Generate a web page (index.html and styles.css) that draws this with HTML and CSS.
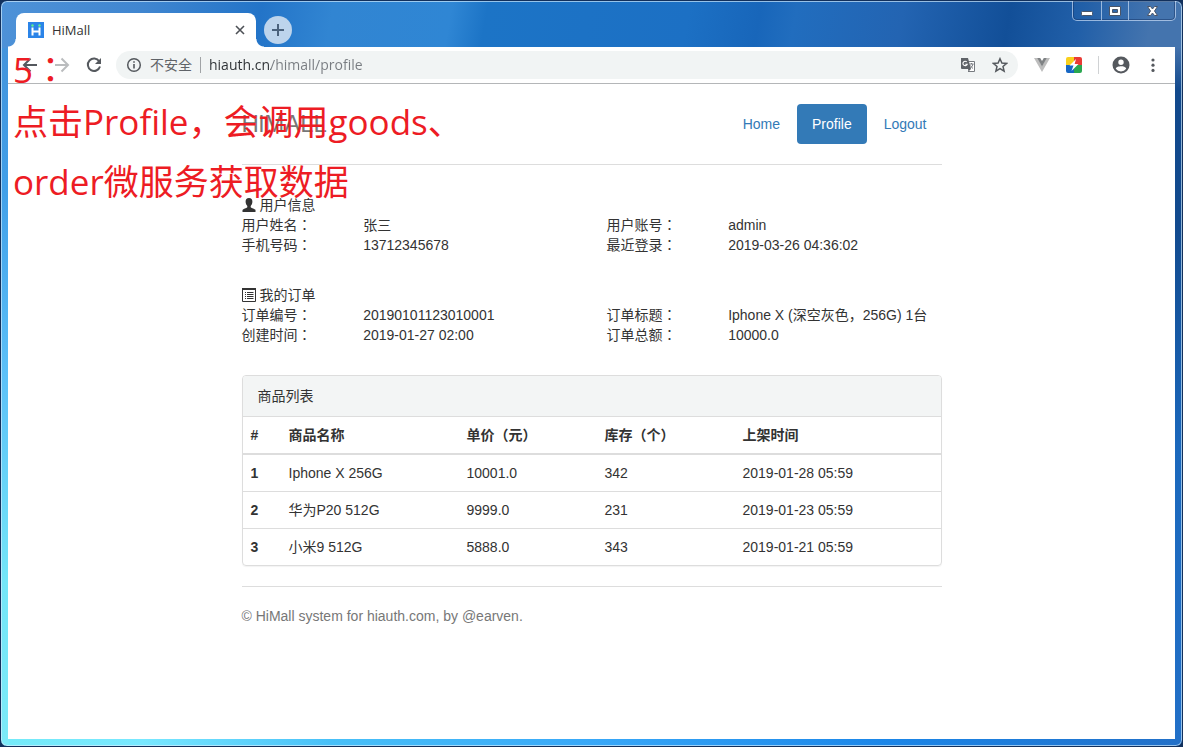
FILE: index.html
```html
<!DOCTYPE html>
<html lang="zh-CN">
<head>
<meta charset="utf-8">
<meta name="viewport" content="width=device-width, initial-scale=1">
<title>HiMall</title>
<link rel="stylesheet" href="styles.css">
</head>
<body>
<div class="window">
  <div class="titlebar">
    <div class="tab">
      <svg class="favicon" width="16" height="16" viewBox="0 0 16 16" aria-hidden="true">
        <rect width="16" height="16" fill="#2b84e8"/>
        <path d="M4.500 5.500V13.500M11.500 5.500V13.500M4.500 9.500H11.500" stroke="#fff" stroke-width="2" fill="none"/>
        <circle cx="4.500" cy="3.500" r="1.200" fill="#5ff08c"/>
        <circle cx="11.500" cy="3.500" r="1.200" fill="#5ff08c"/>
      </svg>
      <span class="tab-title">HiMall</span>
      <button class="tab-close" type="button" aria-label="关闭标签页">
        <svg width="10" height="10" viewBox="0 0 10 10"><path d="M1 1L9 9M9 1L1 9" stroke="#4d5156" stroke-width="1.600"/></svg>
      </button>
      <span class="tab-curve tab-curve-left"></span>
      <span class="tab-curve tab-curve-right"></span>
    </div>
    <button class="new-tab" type="button" aria-label="新标签页">
      <svg width="12" height="12" viewBox="0 0 12 12"><path d="M6 0V12M0 6H12" stroke="#4b627c" stroke-width="2"/></svg>
    </button>
    <div class="window-controls">
      <button class="win-btn" type="button" aria-label="最小化">
        <svg width="28" height="18" viewBox="0 0 28 18"><rect x="8.500" y="9.500" width="11" height="4" rx="1" fill="#fff" stroke="#4a5568"/></svg>
      </button>
      <button class="win-btn" type="button" aria-label="最大化">
        <svg width="26" height="18" viewBox="0 0 26 18"><path fill-rule="evenodd" d="M7.500 4.500H18.500V13.500H7.500ZM10.500 7.500V10.500H15.500V7.500Z" fill="#fff" stroke="#4a5568"/></svg>
      </button>
      <button class="win-btn" type="button" aria-label="关闭">
        <svg width="46" height="18" viewBox="0 0 46 18"><path d="M18.500 4.500H21.500L23.500 7L25.500 4.500H28.500L25.500 9L28.500 13.500H25.500L23.500 11L21.500 13.500H18.500L21.500 9Z" fill="#fff" stroke="#4a5568"/></svg>
      </button>
    </div>
  </div>

  <div class="toolbar">
    <button class="tool" type="button" aria-label="后退">
      <svg width="16" height="16" viewBox="0 0 16 16"><path d="M15 8H2.500M8.500 1.500L2 8L8.500 14.500" fill="none" stroke="#55595e" stroke-width="2"/></svg>
    </button>
    <button class="tool" type="button" aria-label="前进">
      <svg width="16" height="16" viewBox="0 0 16 16"><path d="M1 8H13.500M7.500 1.500L14 8L7.500 14.500" fill="none" stroke="#babcbe" stroke-width="2"/></svg>
    </button>
    <button class="tool" type="button" aria-label="重新加载">
      <svg width="16" height="16" viewBox="0 0 16 16"><path d="M13.200 4.200A6.200 6.200 0 1 0 14 9.500" fill="none" stroke="#55595e" stroke-width="2"/><path d="M15 1V7H9Z" fill="#55595e"/></svg>
    </button>
    <div class="omnibox">
      <svg width="16" height="16" viewBox="0 0 16 16" aria-hidden="true"><circle cx="8" cy="8" r="6.300" fill="none" stroke="#55595e" stroke-width="1.500"/><path d="M8 7V11.500M8 4.200V5.800" stroke="#55595e" stroke-width="1.600"/></svg>
      <label class="security" for="url">不安全</label>
      <input class="url" id="url" type="text" value="hiauth.cn/himall/profile">
      <button class="tool" type="button" aria-label="翻译此页">
        <svg width="16" height="16" viewBox="0 0 16 16"><path d="M5.500 4.500H14.500V14.500H8" fill="#fff" stroke="#777b80"/><path d="M1 1H8L11 12H2Q1 12 1 11Z" fill="#5f6368"/><path d="M6.800 5A2.200 2.200 0 1 0 7.200 7.200H5.300" fill="none" stroke="#fff" stroke-width="1.100"/><path d="M9.500 7H13.500M11.500 6V7M13 7Q12.500 9.500 10.500 11M10.500 8.500Q11.500 10.500 13 11.500" fill="none" stroke="#777b80"/><path d="M8 12H11L8.500 14.500Z" fill="#5f6368"/></svg>
      </button>
      <button class="tool" type="button" aria-label="收藏">
        <svg width="16" height="16" viewBox="0 0 16 16"><path d="M8 1.700L9.900 6L14.600 6.400L11 9.500L12.100 14.100L8 11.600L3.900 14.100L5 9.500L1.400 6.400L6.100 6Z" fill="none" stroke="#55595e" stroke-width="1.500"/></svg>
      </button>
    </div>
    <div class="extensions">
      <button class="tool" type="button" aria-label="Vue.js devtools">
        <svg width="16" height="16" viewBox="0 0 16 16"><path d="M0 1H3.500L8 9L12.500 1H16L8 15Z" fill="#bdbdbd"/><path d="M3.200 1H6.200L8 4L9.800 1H12.800L8 9.500Z" fill="#7f8284"/></svg>
      </button>
      <button class="tool" type="button" aria-label="扩展程序">
        <svg width="16" height="16" viewBox="0 0 16 16"><path d="M0 8V2Q0 0 2 0H8V8Z" fill="#f9d01c"/><path d="M8 0H14Q16 0 16 2V8H8Z" fill="#e93a35"/><path d="M0 8H8V16H2Q0 16 0 14Z" fill="#1767c4"/><path d="M8 8H16V14Q16 16 14 16H8Z" fill="#2aa750"/><path d="M10 2L3.500 8.500H7.500L5.500 14L12.500 7H8.700Z" fill="#fff"/></svg>
      </button>
    </div>
    <div class="account">
      <button class="tool" type="button" aria-label="用户">
        <svg width="18" height="18" viewBox="0 0 18 18"><path fill-rule="evenodd" d="M9 .5A8.500 8.500 0 1 0 9 17.500A8.500 8.500 0 0 0 9 .5ZM9 3.500A2.700 2.700 0 1 1 9 8.900A2.700 2.700 0 1 1 9 3.500ZM3.800 12.800C4 11 7 10.300 9 10.300C11 10.300 14 11 14.200 12.800A6.500 6.500 0 0 1 3.800 12.800Z" fill="#55595e"/></svg>
      </button>
      <button class="tool" type="button" aria-label="菜单">
        <svg width="16" height="16" viewBox="0 0 16 16" fill="#55595e"><circle cx="8" cy="3" r="1.600"/><circle cx="8" cy="8.200" r="1.600"/><circle cx="8" cy="13.400" r="1.600"/></svg>
      </button>
    </div>
  </div>

  <div class="page">
    <div class="container">
      <header class="site-header">
        <h1 class="brand">HiMALL</h1>
        <nav class="nav">
          <a class="nav-link" href="#home">Home</a>
          <a class="nav-link active" href="#profile">Profile</a>
          <a class="nav-link" href="#logout">Logout</a>
        </nav>
      </header>

      <section class="info">
        <h2 class="info-title">
          <svg width="14" height="14" viewBox="0 0 14 14" aria-hidden="true"><path d="M7 0C9.300 0 10.500 1.500 10.400 3.800C10.300 5.600 9.700 7 8.700 7.900V9.200C9.400 10.100 13 10.700 13.500 12V14H.5V12C1 10.700 4.600 10.100 5.300 9.200V7.900C4.300 7 3.700 5.600 3.600 3.800C3.500 1.500 4.700 0 7 0Z" fill="#333"/></svg>
          用户信息
        </h2>
        <dl class="fields">
          <dt>用户姓名<span class="colon" lang="ja">：</span></dt><dd>张三</dd>
          <dt>用户账号<span class="colon" lang="ja">：</span></dt><dd>admin</dd>
          <dt>手机号码<span class="colon" lang="ja">：</span></dt><dd>13712345678</dd>
          <dt>最近登录<span class="colon" lang="ja">：</span></dt><dd>2019-03-26 04:36:02</dd>
        </dl>
      </section>

      <section class="info">
        <h2 class="info-title">
          <svg width="14" height="14" viewBox="0 0 14 14" aria-hidden="true"><path d="M.5 .5H13.500V13.500H.5Z" fill="#fff" stroke="#333"/><path d="M0 1H14" stroke="#333" stroke-width="2"/><path d="M3 4.500H4M3 6.500H4M3 8.500H4M3 10.500H4M5 4.500H11.500M5 6.500H11.500M5 8.500H11.500M5 10.500H11.500" stroke="#333"/></svg>
          我的订单
        </h2>
        <dl class="fields">
          <dt>订单编号<span class="colon" lang="ja">：</span></dt><dd>20190101123010001</dd>
          <dt>订单标题<span class="colon" lang="ja">：</span></dt><dd>Iphone X (深空灰色，256G) 1台</dd>
          <dt>创建时间<span class="colon" lang="ja">：</span></dt><dd>2019-01-27 02:00</dd>
          <dt>订单总额<span class="colon" lang="ja">：</span></dt><dd>10000.0</dd>
        </dl>
      </section>

      <section class="panel">
        <h2 class="panel-heading">商品列表</h2>
        <table class="goods">
          <colgroup><col class="col-index"><col class="col-name"><col class="col-number"><col class="col-number"><col></colgroup>
          <thead>
            <tr><th scope="col">#</th><th scope="col">商品名称</th><th scope="col">单价（元）</th><th scope="col">库存（个）</th><th scope="col">上架时间</th></tr>
          </thead>
          <tbody>
            <tr><th scope="row">1</th><td>Iphone X 256G</td><td>10001.0</td><td>342</td><td>2019-01-28 05:59</td></tr>
            <tr><th scope="row">2</th><td>华为P20 512G</td><td>9999.0</td><td>231</td><td>2019-01-23 05:59</td></tr>
            <tr><th scope="row">3</th><td>小米9 512G</td><td>5888.0</td><td>343</td><td>2019-01-21 05:59</td></tr>
          </tbody>
        </table>
      </section>

      <footer class="site-footer">© HiMall system for hiauth.com, by @earven.</footer>
    </div>
  </div>

  <div class="note">
    <p>5<span class="colon" lang="ja">：</span></p>
    <p>点击Profile，会调用goods、<br>order微服务获取数据</p>
  </div>
</div>
</body>
</html>
```
FILE: styles.css
```css
* {
  box-sizing: border-box;
}

body {
  margin: 0;
  background: #12305c;
  color: #333;
  font: 14px/20px "Liberation Sans", "Noto Sans CJK SC", sans-serif;
}

h1, h2, p, dl, dd {
  margin: 0;
}

button {
  padding: 0;
  border: 0;
  background: none;
  cursor: pointer;
}

svg {
  display: block;
  flex: none;
}

.colon {
  font-family: "Noto Sans CJK JP", sans-serif;
  line-height: 1;
}

.window {
  position: relative;
  display: flex;
  flex-direction: column;
  min-height: 100vh;
  padding: 0 6px 6px;
  border: 1px solid #12305c;
  border-radius: 7px;
  box-shadow: inset 0 0 0 1px rgba(215, 240, 255, 0.65);
  background:
    linear-gradient(100deg, #4e92d8, #4086d0 12%, #2374c8 22%, #3185d2 28%, #2f86d4 38%, #1c74c6 41%, #1c70c4 58%, #1866ba 64%, #216dbe 67%, #2364b2 76%, #124f98 85%, #215fa8 91%, #4474ae 97%) top / 100% 47px no-repeat,
    linear-gradient(#4490d8, #419fe8 25%, #5cc0f8 50%, #74e6f8 78%, #7ceaf8) left / 8px 100% no-repeat,
    linear-gradient(#4874b0, #4674ae 6%, #12498c 12%, #124a8e 30%, #1b68bc 60%, #2270c8) right / 8px 100% no-repeat,
    linear-gradient(90deg, #74eaf8, #78e8ff 12%, #48c0f8 28%, #38a8f8 50%, #1b86e8 75%, #2270c8) bottom / 100% 8px no-repeat;
}

.titlebar {
  display: flex;
  align-items: flex-end;
  height: 46px;
  padding-left: 9px;
}

.tab {
  position: relative;
  display: flex;
  align-items: center;
  width: 240px;
  height: 34px;
  padding: 0 11px 0 12px;
  border-radius: 8px 8px 0 0;
  background: #fff;
}

.tab-title {
  flex: 1;
  margin-left: 8px;
  font: 13px/18px "Open Sans", "Noto Sans", sans-serif;
}

.tab-curve {
  position: absolute;
  bottom: 0;
  width: 8px;
  height: 8px;
}

.tab-curve-left {
  right: 100%;
  background: radial-gradient(circle at 0 0, transparent 7px, #fff 8px);
}

.tab-curve-right {
  left: 100%;
  background: radial-gradient(circle at 100% 0, transparent 7px, #fff 8px);
}

.new-tab {
  display: grid;
  place-items: center;
  width: 28px;
  height: 28px;
  margin: 0 8px 3px;
  border-radius: 50%;
  background: #bdd4ec;
}

.window-controls {
  display: flex;
  align-self: flex-start;
  height: 20px;
  margin-left: auto;
  border: 1px solid rgba(200, 220, 245, 0.7);
  border-top: 0;
  border-radius: 0 0 5px 5px;
  box-shadow: inset 0 0 0 1px rgba(20, 50, 100, 0.5);
}

.win-btn + .win-btn {
  border-left: 1px solid rgba(200, 220, 245, 0.7);
}

.toolbar {
  display: flex;
  align-items: center;
  gap: 16px;
  margin: 0 1px;
  height: 37px;
  padding: 0 14px;
  border-bottom: 1px solid #b4b6b8;
  background: #fff;
}

.omnibox {
  display: flex;
  flex: 1;
  align-items: center;
  gap: 16px;
  height: 28px;
  margin-left: -2px;
  padding: 0 10px;
  border-radius: 14px;
  background: #f1f4f4;
}

.security {
  margin-left: -8px;
  padding-right: 8px;
  border-right: 1px solid #a0a3a6;
  color: #5f6368;
  font: 14px/16px "Open Sans", "Noto Sans CJK SC", sans-serif;
}

.url {
  flex: 1;
  min-width: 0;
  margin-left: -8px;
  padding: 0;
  border: 0;
  outline: 0;
  background: linear-gradient(90deg, #2c3034 62px, #777b80 62px);
  background-clip: text;
  -webkit-background-clip: text;
  -webkit-text-fill-color: transparent;
  font: 14px/20px "Open Sans", "Noto Sans", sans-serif;
}

.extensions,
.account {
  display: flex;
  align-items: center;
  gap: 16px;
}

.account {
  gap: 15px;
  padding-left: 13px;
  border-left: 1px solid #d0d2d4;
}

.page {
  flex: 1;
  margin: 0 1px 1px;
  padding: 20px 15px;
  background: #fff;
}

.container {
  max-width: 700px;
  margin: 0 auto;
}

.site-header {
  display: flex;
  align-items: center;
  justify-content: space-between;
  margin-bottom: 30px;
  padding-bottom: 20px;
  border-bottom: 1px solid #ddd;
}

.brand {
  color: #777;
  font-size: 24px;
  font-weight: 400;
  line-height: 40px;
}

.nav {
  display: flex;
  gap: 2px;
}

.nav-link {
  padding: 10px 15px;
  border-radius: 4px;
  color: #337ab7;
  text-decoration: none;
}

.nav-link.active {
  background: #337ab7;
  color: #fff;
}

.info {
  margin-bottom: 30px;
}

.info-title {
  display: flex;
  align-items: center;
  gap: 4px;
  font-size: 14px;
  font-weight: 400;
}

.fields {
  display: grid;
  grid-template-columns: 1fr 2fr 1fr 2fr;
  margin: 0 -15px;
}

.fields dt,
.fields dd {
  min-width: 0;
  padding-left: 15px;
  white-space: nowrap;
}

.panel {
  margin-bottom: 20px;
  border: 1px solid #ddd;
  border-radius: 4px;
  box-shadow: 0 1px 1px rgba(0, 0, 0, 0.05);
}

.panel-heading {
  padding: 10px 15px;
  border-bottom: 1px solid #ddd;
  border-radius: 3px 3px 0 0;
  background: #f3f5f5;
  font-size: 14px;
  font-weight: 400;
}

.goods {
  width: 100%;
  border-collapse: collapse;
  table-layout: fixed;
}

.col-index {
  width: 38px;
}

.col-name {
  width: 178px;
}

.col-number {
  width: 138px;
}

.goods th,
.goods td {
  padding: 8px;
  border-top: 1px solid #ddd;
  text-align: left;
}

.goods thead th {
  border-top: 0;
  border-bottom: 2px solid #ddd;
}

.site-footer {
  padding-top: 19px;
  border-top: 1px solid #ddd;
  color: #777;
}

.note {
  position: absolute;
  top: 47px;
  left: 12px;
  color: #ed1c24;
  font: 35px/60px "Open Sans", "Noto Sans CJK SC", sans-serif;
  pointer-events: none;
}

.note p:first-child {
  line-height: 44px;
}
```
